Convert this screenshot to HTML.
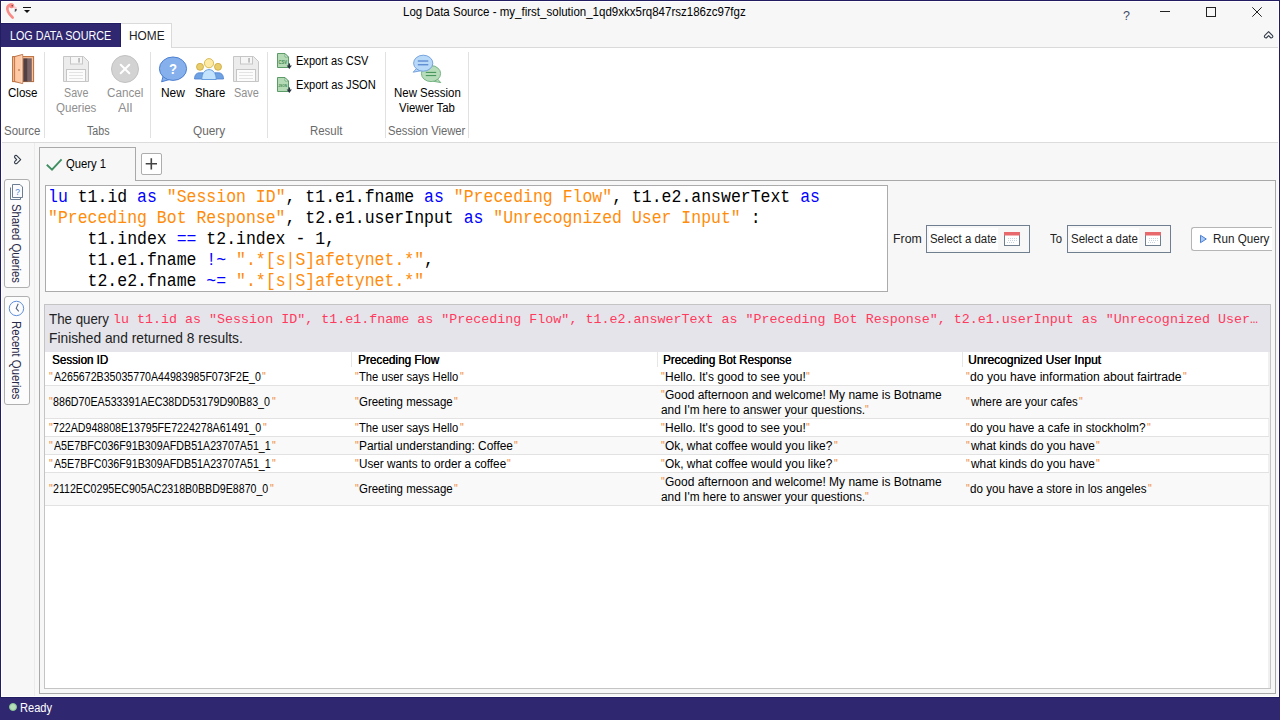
<!DOCTYPE html>
<html lang="en">
<head>
<meta charset="utf-8">
<title>Log Data Source - my_first_solution_1qd9xkx5rq847rsz186zc97fgz</title>
<style>
*{box-sizing:border-box;margin:0;padding:0}
html,body{width:1280px;height:720px;overflow:hidden;background:#f7f7f7;font-family:"Liberation Sans",sans-serif;font-size:12px}
.a{position:absolute}
.t{position:absolute;white-space:pre;transform-origin:0 0;display:block}
.c{font:12px/15px "Liberation Sans",sans-serif;color:#000}
.q{color:#e8912d}
.code{font:17.5px/21px "Liberation Mono",monospace;color:#000}
.code .k{color:#0000ff}
.code .s{color:#ff8c0a}
.code .p{color:#000}
svg{position:absolute;overflow:visible}
.sep{position:absolute;width:1px;top:52px;height:86px;background:#e1e1e1}
.vbtn{position:absolute;left:4px;width:26px;border:1px solid #b0b0b0;border-radius:3px;background:#fcfcfc}
.vt{position:absolute;white-space:pre;transform-origin:0 0;font:12px/12px "Liberation Sans",sans-serif;color:#2a2a4a}
.date{position:absolute;top:225px;height:28px;width:104px;border:1px solid #6f7f90;background:#f7f7f7}
.date i{position:absolute;left:2px;top:2px;width:69px;height:22px;background:#fff}
.rowline{position:absolute;left:45px;width:1224px;height:1px;background:#e2e2e2}
.rowbg{position:absolute;left:45px;width:1224px;background:#f9f9f9}
</style>
</head>
<body>
<!-- window frame -->
<div class="a" style="left:0;top:0;width:1280px;height:720px;border:1px solid #221c63;border-bottom:none"></div>
<!-- title bar -->
<div class="a" style="left:1px;top:1px;width:1278px;height:46px;background:#f7f7f7"></div>
<div class="a" style="left:1px;top:1px;width:1278px;height:1px;background:#fff"></div>
<div class="a" style="left:1px;top:22px;width:120px;height:1px;background:#fff"></div>
<!-- ribbon tab row -->
<div class="a" style="left:0;top:23px;width:121px;height:24px;background:#2f2870;border-top:1px solid #221c63;border-right:1px solid #221c63;border-left:1px solid #221c63"></div>
<div class="a" style="left:121px;top:23px;width:51px;height:25px;background:#fff;border:1px solid #dadada;border-bottom:none;border-left:none"></div>
<div class="a" style="left:171px;top:47px;width:1108px;height:1px;background:#dadada"></div>
<!-- ribbon body -->
<div class="a" style="left:1px;top:48px;width:1278px;height:94px;background:#fff"></div>
<div class="a" style="left:1px;top:47px;width:170px;height:1px;background:#fff"></div>
<div class="a" style="left:1px;top:142px;width:1278px;height:1px;background:#dcdcdc"></div>
<div class="sep" style="left:44px"></div>
<div class="sep" style="left:150px"></div>
<div class="sep" style="left:267px"></div>
<div class="sep" style="left:385px"></div>
<div class="sep" style="left:468px"></div>
<!-- left sidebar -->
<div class="a" style="left:34px;top:143px;width:1px;height:553px;background:#ebebeb"></div>
<div class="vbtn" style="top:179px;height:109px"></div>
<div class="vbtn" style="top:296px;height:109px"></div>
<span class="vt" style="left:22px;top:204px;transform:rotate(90deg) scaleX(0.94)">Shared Queries</span>
<span class="vt" style="left:22px;top:321px;transform:rotate(90deg) scaleX(0.94)">Recent Queries</span>
<!-- tab panel -->
<div class="a" style="left:39px;top:180px;width:1237px;height:514px;border:1px solid #a9a9a9;background:#f7f7f7"></div>
<div class="a" style="left:39px;top:147px;width:97px;height:34px;border:1px solid #a9a9a9;border-bottom:none;background:#f7f7f7"></div>
<div class="a" style="left:141px;top:153px;width:21px;height:22px;border:1px solid #adadad;border-radius:2px;background:#fff"></div>
<!-- editor -->
<div class="a" style="left:45px;top:185px;width:843px;height:107px;border:1px solid #ababab;background:#fff"></div>
<!-- date pickers -->
<div class="date" style="left:926px"><i></i></div>
<div class="date" style="left:1067px"><i></i></div>
<!-- run query -->
<div class="a" style="left:1191px;top:227px;width:84px;height:24px;border:1px solid #b5b5b5;border-right:none;border-radius:3px 0 0 3px;background:#fff"></div>
<div class="a" style="left:1272px;top:226px;width:3px;height:26px;background:#f7f7f7"></div>
<!-- results -->
<div class="a" style="left:44px;top:304px;width:1227px;height:385px;border:1px solid #c4c4c4;background:#fff"></div>
<div class="a" style="left:45px;top:305px;width:1225px;height:47px;background:#e4e4ea"></div>
<div class="a" style="left:1268px;top:352px;width:2px;height:336px;background:#f0f0f0"></div>
<div class="rowbg" style="top:386px;height:32px"></div>
<div class="rowbg" style="top:437px;height:17px"></div>
<div class="rowbg" style="top:473px;height:32px"></div>
<div class="rowline" style="top:385px"></div>
<div class="rowline" style="top:418px"></div>
<div class="rowline" style="top:436px"></div>
<div class="rowline" style="top:454px"></div>
<div class="rowline" style="top:472px"></div>
<div class="rowline" style="top:505px"></div>
<div class="a" style="left:351px;top:352px;width:1px;height:15px;background:#e6e6e6"></div>
<div class="a" style="left:657px;top:352px;width:1px;height:15px;background:#e6e6e6"></div>
<div class="a" style="left:962px;top:352px;width:1px;height:15px;background:#e6e6e6"></div>
<div class="a" style="left:1px;top:1px;width:1px;height:22px;background:#fff"></div>
<div class="a" style="left:1px;top:47px;width:1px;height:650px;background:#fff"></div>
<div class="a" style="left:1278px;top:1px;width:1px;height:696px;background:#fff"></div>
<!-- status bar -->
<div class="a" style="left:1px;top:696px;width:1278px;height:1px;background:#fff"></div>
<div class="a" style="left:0;top:697px;width:1280px;height:23px;background:#2f2870;border-top:1px solid #221c63"></div>
<div class="a" style="left:8.6px;top:703.4px;width:8px;height:8px;border-radius:50%;background:#b4dfb8;border:1px solid #86c493"></div>
<svg class="a" style="left:0;top:0" width="1280" height="720" viewBox="0 0 1280 720">
<!-- flamingo app icon -->
<path d="M12.6 17.6 C8.8 14 6.6 10.4 7.5 7.2 C8.2 4.9 10.4 4.3 12 5" fill="none" stroke="#fa8a85" stroke-width="2.7" stroke-linecap="round"/>
<ellipse cx="11.6" cy="5.8" rx="2.6" ry="2.5" fill="#fa8a85"/>
<path d="M13.4 5.4 L16.9 7.6 L16.9 9 L14.4 8.8 Z" fill="#fdc9cb"/>
<path d="M14.9 9.1 L16.9 9.1 L16.3 11 L14.7 12 Z" fill="#4a4a50"/>
<circle cx="12.2" cy="5.7" r="0.7" fill="#4a3030"/>
<!-- QAT dropdown -->
<rect x="23" y="7" width="8" height="1" fill="#111"/>
<path d="M24 10 L30 10 L27 13 Z" fill="#111"/>
<!-- window controls -->
<text x="1123" y="20.4" font-family="Liberation Sans, sans-serif" font-size="12.5" fill="#3f4a66">?</text>
<rect x="1160" y="11" width="10" height="1" fill="#222"/>
<rect x="1206.5" y="7.5" width="9" height="9" fill="none" stroke="#222" stroke-width="1"/>
<path d="M1252.3 7.3 L1261.7 16.7 M1261.7 7.3 L1252.3 16.7" stroke="#222" stroke-width="1" fill="none"/>
<path d="M 1264.60 35.70 L 1268.60 31.70 L 1272.60 35.70 Q 1273.20 36.80 1272.20 37.60 Q 1271.20 38.30 1270.40 37.50 L 1268.60 35.70 L 1266.80 37.50 Q 1266.00 38.30 1265.00 37.60 Q 1264.00 36.80 1264.60 35.70 Z" fill="none" stroke="#333c4a" stroke-width="1.1" stroke-linejoin="round"/>
<!-- door (Close) -->
<rect x="12.6" y="56.6" width="21" height="25" fill="#f9c29b" stroke="#b96b3b" stroke-width="1"/>
<rect x="23.2" y="58.3" width="4.6" height="23.3" fill="#524144"/>
<rect x="27.8" y="58.3" width="4" height="23.3" fill="#7a6467"/>
<path d="M14.6 56.6 L22.7 54.4 L22.7 83.6 L14.6 81.6 Z" fill="#ffc9a6" stroke="#b96b3b" stroke-width="0.9" stroke-linejoin="round"/>
<path d="M21.9 55.4 L21.9 82.8" stroke="#ffe1cf" stroke-width="0.8"/>
<rect x="18.2" y="69.2" width="1.6" height="1.6" fill="#bf7a4b"/>
<!-- floppy disabled x2 -->
<g>
<path d="M63.5 56.5 L83.5 56.5 L88.5 61.5 L88.5 81.5 L63.5 81.5 Z" fill="#ececec" stroke="#c6c6c6" stroke-width="1"/>
<rect x="70.5" y="56.5" width="12" height="7.5" fill="#f6f6f6" stroke="#c6c6c6" stroke-width="1"/>
<rect x="78.2" y="58" width="1.7" height="4.6" fill="#b9b9b9"/>
<rect x="66.5" y="69.5" width="19" height="12" fill="#fcfcfc" stroke="#c6c6c6" stroke-width="1"/>
<path d="M69 72.5 H83 M69 75.5 H83 M69 78.5 H83" stroke="#e3e3e3" stroke-width="1"/>
</g>
<g transform="translate(170,0)">
<path d="M63.5 56.5 L83.5 56.5 L88.5 61.5 L88.5 81.5 L63.5 81.5 Z" fill="#ececec" stroke="#c6c6c6" stroke-width="1"/>
<rect x="70.5" y="56.5" width="12" height="7.5" fill="#f6f6f6" stroke="#c6c6c6" stroke-width="1"/>
<rect x="78.2" y="58" width="1.7" height="4.6" fill="#b9b9b9"/>
<rect x="66.5" y="69.5" width="19" height="12" fill="#fcfcfc" stroke="#c6c6c6" stroke-width="1"/>
<path d="M69 72.5 H83 M69 75.5 H83 M69 78.5 H83" stroke="#e3e3e3" stroke-width="1"/>
</g>
<!-- cancel all -->
<circle cx="125" cy="69" r="13.5" fill="#d3d3d3" stroke="#c2c2c2" stroke-width="1"/>
<path d="M120.7 64.7 L129.3 73.3 M129.3 64.7 L120.7 73.3" stroke="#fff" stroke-width="2" stroke-linecap="round"/>
<!-- new (bubble ?) -->
<path d="M163.3 75.5 L161.6 81.8 L170.5 79.2 Z" fill="#86b0ec" stroke="#4d80d2" stroke-width="1" stroke-linejoin="round"/>
<ellipse cx="173" cy="68.7" rx="13.6" ry="11.7" fill="#86b0ec" stroke="#4d80d2" stroke-width="1"/>
<path d="M164.2 75.8 L169.5 78.6" stroke="#86b0ec" stroke-width="1.6"/>
<text x="168.9" y="74.4" font-family="Liberation Sans, sans-serif" font-weight="bold" font-size="15.5" fill="#fff" textLength="8" lengthAdjust="spacingAndGlyphs">?</text>
<!-- share -->
<path d="M194.5 79 C194.5 75 196.5 72.8 199.5 72.8 L203 72.8 L203 79 Z" fill="#6fa2e3" stroke="#4d80d2" stroke-width="0.8"/>
<path d="M223.5 79 C223.5 75 221.5 72.8 218.5 72.8 L215 72.8 L215 79 Z" fill="#6fa2e3" stroke="#4d80d2" stroke-width="0.8"/>
<circle cx="200" cy="66.8" r="3.5" fill="#e9cd6a" stroke="#caa63c" stroke-width="0.8"/>
<circle cx="218" cy="66.8" r="3.5" fill="#e9cd6a" stroke="#caa63c" stroke-width="0.8"/>
<path d="M201.8 79.5 C201.8 73.5 204.8 69.6 209 69.6 C213.2 69.6 216.2 73.5 216.2 79.5 Z" fill="#c3e3fc" stroke="#5b95da" stroke-width="0.9"/>
<circle cx="209" cy="63.2" r="4.6" fill="#fdeaa5" stroke="#d4b44c" stroke-width="0.9"/>
<!-- export icons -->
<g>
<path d="M277.5 53.5 L285 53.5 L288.5 57 L288.5 67.5 L277.5 67.5 Z" fill="#b5dab6" stroke="#5b9b68" stroke-width="1" stroke-linejoin="round"/>
<path d="M285 53.8 L285 57 L288.2 57 Z" fill="#f4faf4" stroke="#5b9b68" stroke-width="0.7" stroke-linejoin="round"/>
<path d="M289.3 63.4 V67" stroke="#2a3340" stroke-width="1.5" fill="none"/>
<path d="M286.7 65.6 L291.9 65.6 L289.3 68.9 Z" fill="#2a3340"/>
</g>
<text x="278.4" y="63.6" font-family="Liberation Sans, sans-serif" font-weight="bold" font-size="4.6" fill="#3f8a52" textLength="8.6" lengthAdjust="spacingAndGlyphs">CSV</text>
<g transform="translate(0,24)">
<path d="M277.5 53.5 L285 53.5 L288.5 57 L288.5 67.5 L277.5 67.5 Z" fill="#b5dab6" stroke="#5b9b68" stroke-width="1" stroke-linejoin="round"/>
<path d="M285 53.8 L285 57 L288.2 57 Z" fill="#f4faf4" stroke="#5b9b68" stroke-width="0.7" stroke-linejoin="round"/>
<path d="M289.3 63.4 V67" stroke="#2a3340" stroke-width="1.5" fill="none"/>
<path d="M286.7 65.6 L291.9 65.6 L289.3 68.9 Z" fill="#2a3340"/>
</g>
<text x="278.3" y="87.4" font-family="Liberation Sans, sans-serif" font-weight="bold" font-size="3.9" fill="#3f8a52" textLength="8.8" lengthAdjust="spacingAndGlyphs">JSON</text>
<!-- session viewer bubbles -->
<path d="M437.5 79 L440.8 82.6 L433.5 81.3 Z" fill="#b7dcba" stroke="#6cad7b" stroke-width="0.9" stroke-linejoin="round"/>
<ellipse cx="431" cy="73.6" rx="9.6" ry="8" fill="#b7dcba" stroke="#6cad7b" stroke-width="0.9"/>
<path d="M425.8 72.4 H436.2 M425.8 75.6 H436.2" stroke="#3f8f55" stroke-width="1"/>
<path d="M416.5 68.5 L413.2 72.2 L420.5 70.8 Z" fill="#b9d9f9" stroke="#6b9bd9" stroke-width="0.9" stroke-linejoin="round"/>
<ellipse cx="423.2" cy="63.2" rx="9.6" ry="8" fill="#b9d9f9" stroke="#6b9bd9" stroke-width="0.9"/>
<path d="M417.8 61 H428.3 M417.8 64.8 H428.3" stroke="#3d6fc4" stroke-width="1"/>
<!-- sidebar expand -->
<path d="M 16.70 155.55 L 20.70 159.55 L 16.70 163.55 Q 15.60 164.15 14.80 163.15 Q 14.10 162.15 14.90 161.35 L 16.70 159.55 L 14.90 157.75 Q 14.10 156.95 14.80 155.95 Q 15.60 154.95 16.70 155.55 Z" fill="none" stroke="#333c4a" stroke-width="1.1" stroke-linejoin="round"/>
<!-- shared queries icon -->
<path d="M10.5 187.5 L10.5 199.5 L20.5 199.5 L20.5 197.5" fill="none" stroke="#6c7c92" stroke-width="1"/>
<path d="M12.5 184.5 L20 184.5 L22.5 187 L22.5 197.5 L12.5 197.5 Z" fill="#fbfbfd" stroke="#6c7c92" stroke-width="1"/>
<text x="15.2" y="194.6" font-family="Liberation Sans, sans-serif" font-size="8.5" fill="#4d80d2">?</text>
<!-- recent clock -->
<circle cx="16.45" cy="308.45" r="7.2" fill="#fdfdff" stroke="#4d80d2" stroke-width="0.9"/>
<path d="M18.2 303.8 L16.2 308.4 L18.8 311.3" fill="none" stroke="#55657f" stroke-width="1.1"/>
<!-- check -->
<path d="M46.8 164.8 L52 169.6 L61.6 159.4" fill="none" stroke="#3f8f62" stroke-width="1.9"/>
<!-- plus -->
<path d="M145.7 163.8 H157 M151.3 158.2 V169.5" stroke="#444" stroke-width="1.6" fill="none"/>
<!-- calendars -->
<g>
<rect x="1004.5" y="232.5" width="15" height="13" fill="#fff" stroke="#6f7f90" stroke-width="1"/>
<rect x="1004" y="232" width="16" height="3.5" fill="#e8696c"/>
<path d="M1008 238.5 H1018 M1008 240.5 H1018 M1007 242.5 H1015" stroke="#c9d2e0" stroke-width="1" stroke-dasharray="1 1"/>
</g>
<g transform="translate(141,0)">
<rect x="1004.5" y="232.5" width="15" height="13" fill="#fff" stroke="#6f7f90" stroke-width="1"/>
<rect x="1004" y="232" width="16" height="3.5" fill="#e8696c"/>
<path d="M1008 238.5 H1018 M1008 240.5 H1018 M1007 242.5 H1015" stroke="#c9d2e0" stroke-width="1" stroke-dasharray="1 1"/>
</g>
<!-- play -->
<path d="M1200.5 235.3 L1206.3 239 L1200.5 242.7 Z" fill="#a9c9f3" stroke="#4d80d2" stroke-width="1" stroke-linejoin="round"/>
</svg>

<span class="t" style="left:402.74px;top:1.84px;font:12px/20px 'Liberation Sans', sans-serif;color:#000;transform:scaleX(0.9604);">Log Data Source - my_first_solution_1qd9xkx5rq847rsz186zc97fgz</span>
<span class="t" style="left:9.69px;top:25.84px;font:12px/20px 'Liberation Sans', sans-serif;color:#fff;transform:scaleX(0.8960);">LOG DATA SOURCE</span>
<span class="t" style="left:128.81px;top:25.84px;font:12px/20px 'Liberation Sans', sans-serif;color:#222;transform:scaleX(0.9886);">HOME</span>
<span class="t" style="left:7.92px;top:82.84px;font:12px/20px 'Liberation Sans', sans-serif;color:#000;transform:scaleX(0.9626);">Close</span>
<span class="t" style="left:4.02px;top:120.84px;font:12px/20px 'Liberation Sans', sans-serif;color:#6a6a6a;transform:scaleX(0.9582);">Source</span>
<span class="t" style="left:64.05px;top:82.84px;font:12px/20px 'Liberation Sans', sans-serif;color:#8f8f8f;transform:scaleX(0.8909);">Save</span>
<span class="t" style="left:56.02px;top:97.84px;font:12px/20px 'Liberation Sans', sans-serif;color:#8f8f8f;transform:scaleX(0.9607);">Queries</span>
<span class="t" style="left:106.91px;top:82.84px;font:12px/20px 'Liberation Sans', sans-serif;color:#8f8f8f;transform:scaleX(0.9753);">Cancel</span>
<span class="t" style="left:118.00px;top:97.84px;font:12px/20px 'Liberation Sans', sans-serif;color:#8f8f8f;transform:scaleX(1.0740);">All</span>
<span class="t" style="left:86.82px;top:120.84px;font:12px/20px 'Liberation Sans', sans-serif;color:#6a6a6a;transform:scaleX(0.8890);">Tabs</span>
<span class="t" style="left:161.01px;top:82.84px;font:12px/20px 'Liberation Sans', sans-serif;color:#000;transform:scaleX(0.9940);">New</span>
<span class="t" style="left:194.53px;top:82.84px;font:12px/20px 'Liberation Sans', sans-serif;color:#000;transform:scaleX(0.9437);">Share</span>
<span class="t" style="left:233.55px;top:82.84px;font:12px/20px 'Liberation Sans', sans-serif;color:#8f8f8f;transform:scaleX(0.9099);">Save</span>
<span class="t" style="left:192.81px;top:120.84px;font:12px/20px 'Liberation Sans', sans-serif;color:#6a6a6a;transform:scaleX(0.9852);">Query</span>
<span class="t" style="left:295.57px;top:50.84px;font:12px/20px 'Liberation Sans', sans-serif;color:#000;transform:scaleX(0.9204);">Export as CSV</span>
<span class="t" style="left:295.57px;top:74.84px;font:12px/20px 'Liberation Sans', sans-serif;color:#000;transform:scaleX(0.9268);">Export as JSON</span>
<span class="t" style="left:309.64px;top:120.84px;font:12px/20px 'Liberation Sans', sans-serif;color:#6a6a6a;transform:scaleX(0.9522);">Result</span>
<span class="t" style="left:393.94px;top:82.84px;font:12px/20px 'Liberation Sans', sans-serif;color:#000;transform:scaleX(0.9538);">New Session</span>
<span class="t" style="left:399.40px;top:97.84px;font:12px/20px 'Liberation Sans', sans-serif;color:#000;transform:scaleX(0.9477);">Viewer Tab</span>
<span class="t" style="left:387.83px;top:120.84px;font:12px/20px 'Liberation Sans', sans-serif;color:#6a6a6a;transform:scaleX(0.9377);">Session Viewer</span>
<span class="t" style="left:65.78px;top:153.84px;font:12px/20px 'Liberation Sans', sans-serif;color:#000;transform:scaleX(0.9384);">Query 1</span>
<span class="t" style="left:892.58px;top:228.84px;font:12px/20px 'Liberation Sans', sans-serif;color:#222;transform:scaleX(1.0265);">From</span>
<span class="t" style="left:929.77px;top:228.84px;font:12px/20px 'Liberation Sans', sans-serif;color:#222;transform:scaleX(0.9519);">Select a date</span>
<span class="t" style="left:1050.11px;top:228.84px;font:12px/20px 'Liberation Sans', sans-serif;color:#222;transform:scaleX(0.9417);">To</span>
<span class="t" style="left:1070.52px;top:228.84px;font:12px/20px 'Liberation Sans', sans-serif;color:#222;transform:scaleX(0.9555);">Select a date</span>
<span class="t" style="left:1212.63px;top:228.84px;font:12px/20px 'Liberation Sans', sans-serif;color:#222;transform:scaleX(0.9715);">Run Query</span>
<span class="t" style="left:49.02px;top:309.45px;font:14.3px/20px 'Liberation Sans', sans-serif;color:#222;transform:scaleX(0.9309);">The query</span>
<span class="t" style="left:48.94px;top:328.05px;font:14.3px/20px 'Liberation Sans', sans-serif;color:#222;transform:scaleX(0.9636);">Finished and returned 8 results.</span>
<span class="t" style="left:113.08px;top:309.78px;font:13.6px/20px 'Liberation Mono', monospace;color:#ff3a5e;transform:scaleX(0.9815);">lu t1.id as "Session ID", t1.e1.fname as "Preceding Flow", t1.e2.answerText as "Preceding Bot Response", t2.e1.userInput as "Unrecognized User…</span>
<span class="t" style="left:51.92px;top:349.84px;font:12px/20px 'Liberation Sans', sans-serif;color:#000;transform:scaleX(0.9674);text-shadow:0.3px 0 0 #000;">Session ID</span>
<span class="t" style="left:357.62px;top:349.84px;font:12px/20px 'Liberation Sans', sans-serif;color:#000;transform:scaleX(0.9806);text-shadow:0.3px 0 0 #000;">Preceding Flow</span>
<span class="t" style="left:663.13px;top:349.84px;font:12px/20px 'Liberation Sans', sans-serif;color:#000;transform:scaleX(0.9667);text-shadow:0.3px 0 0 #000;">Preceding Bot Response</span>
<span class="t" style="left:968.10px;top:349.84px;font:12px/20px 'Liberation Sans', sans-serif;color:#000;transform:scaleX(1.0015);text-shadow:0.3px 0 0 #000;">Unrecognized User Input</span>
<span class="t" style="left:19.67px;top:697.84px;font:12px/20px 'Liberation Sans', sans-serif;color:#fff;transform:scaleX(0.9249);">Ready</span>
<span class="t" style="left:48.86px;top:366.84px;font:12px/20px 'Liberation Sans', sans-serif;color:#ee8a3c;transform:scaleX(0.8788);">"</span>
<span class="t" style="left:53.70px;top:366.84px;font:12px/20px 'Liberation Sans', sans-serif;color:#000;transform:scaleX(0.8861);">A265672B35035770A44983985F073F2E_0</span>
<span class="t" style="left:262.06px;top:366.84px;font:12px/20px 'Liberation Sans', sans-serif;color:#ee8a3c;transform:scaleX(0.8788);">"</span>
<span class="t" style="left:354.66px;top:366.84px;font:12px/20px 'Liberation Sans', sans-serif;color:#ee8a3c;transform:scaleX(0.8788);">"</span>
<span class="t" style="left:359.31px;top:366.84px;font:12px/20px 'Liberation Sans', sans-serif;color:#000;transform:scaleX(0.9348);">The user says Hello</span>
<span class="t" style="left:459.76px;top:366.84px;font:12px/20px 'Liberation Sans', sans-serif;color:#ee8a3c;transform:scaleX(0.8788);">"</span>
<span class="t" style="left:660.86px;top:366.84px;font:12px/20px 'Liberation Sans', sans-serif;color:#ee8a3c;transform:scaleX(0.8788);">"</span>
<span class="t" style="left:664.80px;top:366.84px;font:12px/20px 'Liberation Sans', sans-serif;color:#000;transform:scaleX(0.9985);">Hello. It's good to see you!</span>
<span class="t" style="left:806.36px;top:366.84px;font:12px/20px 'Liberation Sans', sans-serif;color:#ee8a3c;transform:scaleX(0.8788);">"</span>
<span class="t" style="left:966.06px;top:366.84px;font:12px/20px 'Liberation Sans', sans-serif;color:#ee8a3c;transform:scaleX(0.8788);">"</span>
<span class="t" style="left:970.39px;top:366.84px;font:12px/20px 'Liberation Sans', sans-serif;color:#000;transform:scaleX(1.0134);">do you have information about fairtrade</span>
<span class="t" style="left:1183.26px;top:366.84px;font:12px/20px 'Liberation Sans', sans-serif;color:#ee8a3c;transform:scaleX(0.8788);">"</span>
<span class="t" style="left:48.86px;top:391.84px;font:12px/20px 'Liberation Sans', sans-serif;color:#ee8a3c;transform:scaleX(0.8788);">"</span>
<span class="t" style="left:53.25px;top:391.84px;font:12px/20px 'Liberation Sans', sans-serif;color:#000;transform:scaleX(0.8910);">886D70EA533391AEC38DD53179D90B83_0</span>
<span class="t" style="left:271.66px;top:391.84px;font:12px/20px 'Liberation Sans', sans-serif;color:#ee8a3c;transform:scaleX(0.8788);">"</span>
<span class="t" style="left:354.66px;top:391.84px;font:12px/20px 'Liberation Sans', sans-serif;color:#ee8a3c;transform:scaleX(0.8788);">"</span>
<span class="t" style="left:358.93px;top:391.84px;font:12px/20px 'Liberation Sans', sans-serif;color:#000;transform:scaleX(0.9559);">Greeting message</span>
<span class="t" style="left:453.96px;top:391.84px;font:12px/20px 'Liberation Sans', sans-serif;color:#ee8a3c;transform:scaleX(0.8788);">"</span>
<span class="t" style="left:660.86px;top:384.84px;font:12px/20px 'Liberation Sans', sans-serif;color:#ee8a3c;transform:scaleX(0.8788);">"</span>
<span class="t" style="left:665.10px;top:384.84px;font:12px/20px 'Liberation Sans', sans-serif;color:#000;transform:scaleX(0.9999);">Good afternoon and welcome! My name is Botname</span>
<span class="t" style="left:660.51px;top:399.84px;font:12px/20px 'Liberation Sans', sans-serif;color:#000;transform:scaleX(0.9889);">and I'm here to answer your questions.</span>
<span class="t" style="left:865.36px;top:399.84px;font:12px/20px 'Liberation Sans', sans-serif;color:#ee8a3c;transform:scaleX(0.8788);">"</span>
<span class="t" style="left:966.06px;top:391.84px;font:12px/20px 'Liberation Sans', sans-serif;color:#ee8a3c;transform:scaleX(0.8788);">"</span>
<span class="t" style="left:971.00px;top:391.84px;font:12px/20px 'Liberation Sans', sans-serif;color:#000;transform:scaleX(0.9530);">where are your cafes</span>
<span class="t" style="left:1079.16px;top:391.84px;font:12px/20px 'Liberation Sans', sans-serif;color:#ee8a3c;transform:scaleX(0.8788);">"</span>
<span class="t" style="left:48.86px;top:417.84px;font:12px/20px 'Liberation Sans', sans-serif;color:#ee8a3c;transform:scaleX(0.8788);">"</span>
<span class="t" style="left:53.17px;top:417.84px;font:12px/20px 'Liberation Sans', sans-serif;color:#000;transform:scaleX(0.8858);">722AD948808E13795FE7224278A61491_0</span>
<span class="t" style="left:262.66px;top:417.84px;font:12px/20px 'Liberation Sans', sans-serif;color:#ee8a3c;transform:scaleX(0.8788);">"</span>
<span class="t" style="left:354.66px;top:417.84px;font:12px/20px 'Liberation Sans', sans-serif;color:#ee8a3c;transform:scaleX(0.8788);">"</span>
<span class="t" style="left:359.31px;top:417.84px;font:12px/20px 'Liberation Sans', sans-serif;color:#000;transform:scaleX(0.9348);">The user says Hello</span>
<span class="t" style="left:459.76px;top:417.84px;font:12px/20px 'Liberation Sans', sans-serif;color:#ee8a3c;transform:scaleX(0.8788);">"</span>
<span class="t" style="left:660.86px;top:417.84px;font:12px/20px 'Liberation Sans', sans-serif;color:#ee8a3c;transform:scaleX(0.8788);">"</span>
<span class="t" style="left:664.80px;top:417.84px;font:12px/20px 'Liberation Sans', sans-serif;color:#000;transform:scaleX(0.9985);">Hello. It's good to see you!</span>
<span class="t" style="left:806.36px;top:417.84px;font:12px/20px 'Liberation Sans', sans-serif;color:#ee8a3c;transform:scaleX(0.8788);">"</span>
<span class="t" style="left:966.06px;top:417.84px;font:12px/20px 'Liberation Sans', sans-serif;color:#ee8a3c;transform:scaleX(0.8788);">"</span>
<span class="t" style="left:970.41px;top:417.84px;font:12px/20px 'Liberation Sans', sans-serif;color:#000;transform:scaleX(0.9851);">do you have a cafe in stockholm?</span>
<span class="t" style="left:1147.26px;top:417.84px;font:12px/20px 'Liberation Sans', sans-serif;color:#ee8a3c;transform:scaleX(0.8788);">"</span>
<span class="t" style="left:48.86px;top:435.84px;font:12px/20px 'Liberation Sans', sans-serif;color:#ee8a3c;transform:scaleX(0.8788);">"</span>
<span class="t" style="left:53.70px;top:435.84px;font:12px/20px 'Liberation Sans', sans-serif;color:#000;transform:scaleX(0.8900);">A5E7BFC036F91B309AFDB51A23707A51_1</span>
<span class="t" style="left:271.66px;top:435.84px;font:12px/20px 'Liberation Sans', sans-serif;color:#ee8a3c;transform:scaleX(0.8788);">"</span>
<span class="t" style="left:354.66px;top:435.84px;font:12px/20px 'Liberation Sans', sans-serif;color:#ee8a3c;transform:scaleX(0.8788);">"</span>
<span class="t" style="left:358.61px;top:435.84px;font:12px/20px 'Liberation Sans', sans-serif;color:#000;transform:scaleX(0.9919);">Partial understanding: Coffee</span>
<span class="t" style="left:513.86px;top:435.84px;font:12px/20px 'Liberation Sans', sans-serif;color:#ee8a3c;transform:scaleX(0.8788);">"</span>
<span class="t" style="left:660.86px;top:435.84px;font:12px/20px 'Liberation Sans', sans-serif;color:#ee8a3c;transform:scaleX(0.8788);">"</span>
<span class="t" style="left:665.20px;top:435.84px;font:12px/20px 'Liberation Sans', sans-serif;color:#000;transform:scaleX(0.9931);">Ok, what coffee would you like?</span>
<span class="t" style="left:833.96px;top:435.84px;font:12px/20px 'Liberation Sans', sans-serif;color:#ee8a3c;transform:scaleX(0.8788);">"</span>
<span class="t" style="left:966.06px;top:435.84px;font:12px/20px 'Liberation Sans', sans-serif;color:#ee8a3c;transform:scaleX(0.8788);">"</span>
<span class="t" style="left:971.00px;top:435.84px;font:12px/20px 'Liberation Sans', sans-serif;color:#000;transform:scaleX(0.9885);">what kinds do you have</span>
<span class="t" style="left:1096.26px;top:435.84px;font:12px/20px 'Liberation Sans', sans-serif;color:#ee8a3c;transform:scaleX(0.8788);">"</span>
<span class="t" style="left:48.86px;top:453.84px;font:12px/20px 'Liberation Sans', sans-serif;color:#ee8a3c;transform:scaleX(0.8788);">"</span>
<span class="t" style="left:53.70px;top:453.84px;font:12px/20px 'Liberation Sans', sans-serif;color:#000;transform:scaleX(0.8900);">A5E7BFC036F91B309AFDB51A23707A51_1</span>
<span class="t" style="left:271.66px;top:453.84px;font:12px/20px 'Liberation Sans', sans-serif;color:#ee8a3c;transform:scaleX(0.8788);">"</span>
<span class="t" style="left:354.66px;top:453.84px;font:12px/20px 'Liberation Sans', sans-serif;color:#ee8a3c;transform:scaleX(0.8788);">"</span>
<span class="t" style="left:358.62px;top:453.84px;font:12px/20px 'Liberation Sans', sans-serif;color:#000;transform:scaleX(0.9776);">User wants to order a coffee</span>
<span class="t" style="left:507.06px;top:453.84px;font:12px/20px 'Liberation Sans', sans-serif;color:#ee8a3c;transform:scaleX(0.8788);">"</span>
<span class="t" style="left:660.86px;top:453.84px;font:12px/20px 'Liberation Sans', sans-serif;color:#ee8a3c;transform:scaleX(0.8788);">"</span>
<span class="t" style="left:665.20px;top:453.84px;font:12px/20px 'Liberation Sans', sans-serif;color:#000;transform:scaleX(0.9931);">Ok, what coffee would you like?</span>
<span class="t" style="left:833.96px;top:453.84px;font:12px/20px 'Liberation Sans', sans-serif;color:#ee8a3c;transform:scaleX(0.8788);">"</span>
<span class="t" style="left:966.06px;top:453.84px;font:12px/20px 'Liberation Sans', sans-serif;color:#ee8a3c;transform:scaleX(0.8788);">"</span>
<span class="t" style="left:971.00px;top:453.84px;font:12px/20px 'Liberation Sans', sans-serif;color:#000;transform:scaleX(0.9885);">what kinds do you have</span>
<span class="t" style="left:1096.26px;top:453.84px;font:12px/20px 'Liberation Sans', sans-serif;color:#ee8a3c;transform:scaleX(0.8788);">"</span>
<span class="t" style="left:48.86px;top:478.84px;font:12px/20px 'Liberation Sans', sans-serif;color:#ee8a3c;transform:scaleX(0.8788);">"</span>
<span class="t" style="left:53.17px;top:478.84px;font:12px/20px 'Liberation Sans', sans-serif;color:#000;transform:scaleX(0.8848);">2112EC0295EC905AC2318B0BBD9E8870_0</span>
<span class="t" style="left:269.86px;top:478.84px;font:12px/20px 'Liberation Sans', sans-serif;color:#ee8a3c;transform:scaleX(0.8788);">"</span>
<span class="t" style="left:354.66px;top:478.84px;font:12px/20px 'Liberation Sans', sans-serif;color:#ee8a3c;transform:scaleX(0.8788);">"</span>
<span class="t" style="left:358.93px;top:478.84px;font:12px/20px 'Liberation Sans', sans-serif;color:#000;transform:scaleX(0.9559);">Greeting message</span>
<span class="t" style="left:453.96px;top:478.84px;font:12px/20px 'Liberation Sans', sans-serif;color:#ee8a3c;transform:scaleX(0.8788);">"</span>
<span class="t" style="left:660.86px;top:471.84px;font:12px/20px 'Liberation Sans', sans-serif;color:#ee8a3c;transform:scaleX(0.8788);">"</span>
<span class="t" style="left:665.10px;top:471.84px;font:12px/20px 'Liberation Sans', sans-serif;color:#000;transform:scaleX(0.9999);">Good afternoon and welcome! My name is Botname</span>
<span class="t" style="left:660.51px;top:486.84px;font:12px/20px 'Liberation Sans', sans-serif;color:#000;transform:scaleX(0.9889);">and I'm here to answer your questions.</span>
<span class="t" style="left:865.36px;top:486.84px;font:12px/20px 'Liberation Sans', sans-serif;color:#ee8a3c;transform:scaleX(0.8788);">"</span>
<span class="t" style="left:966.06px;top:478.84px;font:12px/20px 'Liberation Sans', sans-serif;color:#ee8a3c;transform:scaleX(0.8788);">"</span>
<span class="t" style="left:970.42px;top:478.84px;font:12px/20px 'Liberation Sans', sans-serif;color:#000;transform:scaleX(0.9690);">do you have a store in los angeles</span>
<span class="t" style="left:1148.26px;top:478.84px;font:12px/20px 'Liberation Sans', sans-serif;color:#ee8a3c;transform:scaleX(0.8788);">"</span>
<!--ROWS-->
<span class="t code" style="left:47.7px;top:186.84px;transform:scaleX(0.9423);"><span class="k">lu</span><span class="p"> t1.id </span><span class="k">as</span><span class="p"> </span><span class="s">"Session ID"</span><span class="p">, t1.e1.fname </span><span class="k">as</span><span class="p"> </span><span class="s">"Preceding Flow"</span><span class="p">, t1.e2.answerText </span><span class="k">as</span></span>
<span class="t code" style="left:47.7px;top:207.84px;transform:scaleX(0.9423);"><span class="s">"Preceding Bot Response"</span><span class="p">, t2.e1.userInput </span><span class="k">as</span><span class="p"> </span><span class="s">"Unrecognized User Input"</span><span class="p"> :</span></span>
<span class="t code" style="left:47.7px;top:228.84px;transform:scaleX(0.9423);"><span class="p">    t1.index </span><span class="k">==</span><span class="p"> t2.index - 1,</span></span>
<span class="t code" style="left:47.7px;top:249.84px;transform:scaleX(0.9423);"><span class="p">    t1.e1.fname </span><span class="k">!~</span><span class="p"> </span><span class="s">".*[s|S]afetynet.*"</span><span class="p">,</span></span>
<span class="t code" style="left:47.7px;top:270.84px;transform:scaleX(0.9423);"><span class="p">    t2.e2.fname </span><span class="k">~=</span><span class="p"> </span><span class="s">".*[s|S]afetynet.*"</span></span>
</body>
</html>
